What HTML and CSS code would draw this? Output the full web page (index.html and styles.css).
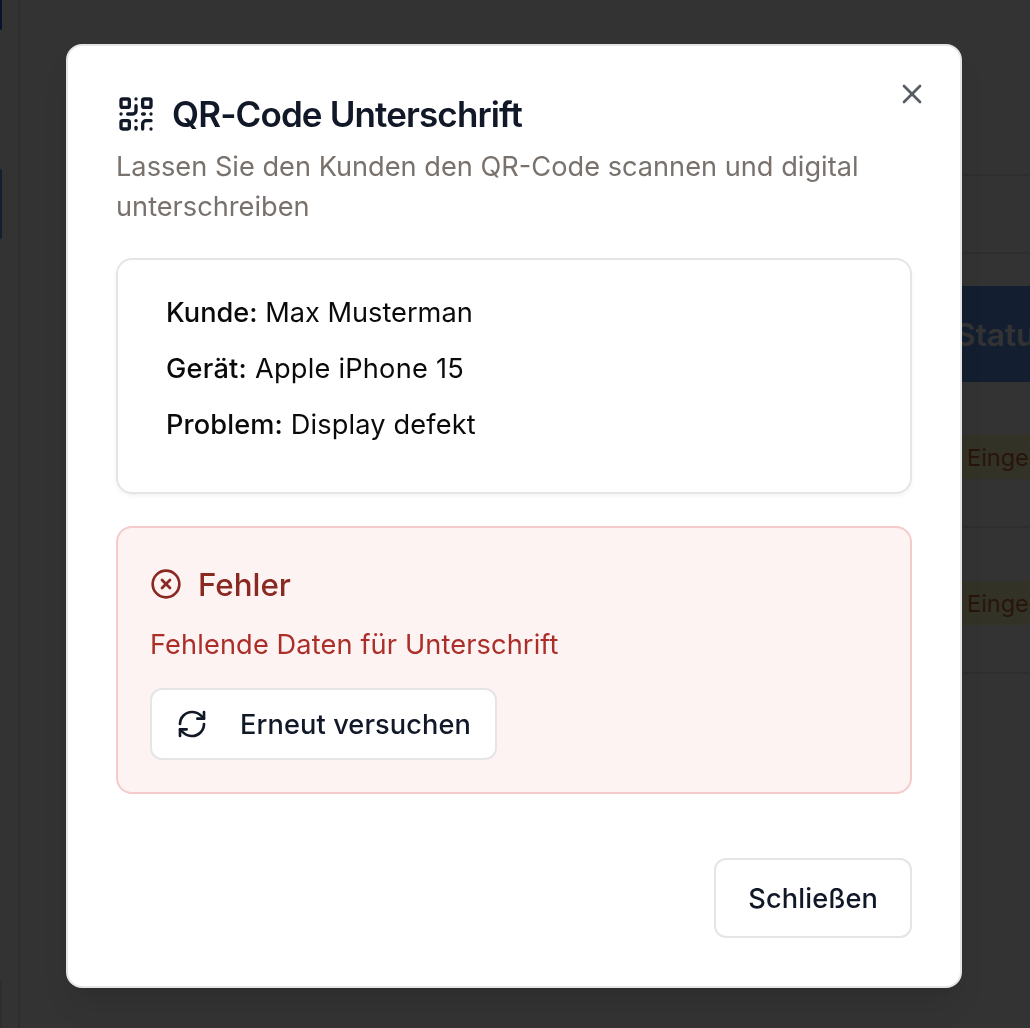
FILE: index.html
```html
<!DOCTYPE html>
<html lang="de">
<head>
<meta charset="utf-8">
<title>QR-Code Unterschrift</title>
<link rel="stylesheet" href="styles.css">
</head>
<body>
<div class="page">
  <aside class="sidebar">
    <div class="nav-item nav-item-primary"></div>
    <div class="nav-item nav-item-active"></div>
    <div class="nav-item nav-item-muted"></div>
  </aside>
  <main class="content">
    <div class="topbar"></div>
    <div class="toolbar"></div>
    <div class="table">
      <div class="table-head">Status</div>
      <div class="table-row"><span class="badge">Eingegangen</span></div>
      <div class="table-row"><span class="badge">Eingegangen</span></div>
    </div>
  </main>
</div>
<div class="overlay">
  <section class="dialog" role="dialog" aria-labelledby="dialog-title">
    <button class="close" aria-label="Schließen">
      <svg class="icon" viewBox="0 0 24 24"><path d="M18 6 6 18"/><path d="m6 6 12 12"/></svg>
    </button>
    <header class="dialog-header">
      <h2 class="title" id="dialog-title">
        <svg class="icon icon-lg" viewBox="0 0 24 24"><rect width="5" height="5" x="3" y="3" rx="1"/><rect width="5" height="5" x="16" y="3" rx="1"/><rect width="5" height="5" x="3" y="16" rx="1"/><path d="M21 16h-3a2 2 0 0 0-2 2v3"/><path d="M21 21v.01"/><path d="M12 7v3a2 2 0 0 1-2 2H7"/><path d="M3 12h.01"/><path d="M12 3h.01"/><path d="M12 16v.01"/><path d="M16 12h1"/><path d="M21 12v.01"/><path d="M12 21v-1"/></svg>
        <span>QR-Code Unterschrift</span>
      </h2>
      <p class="description">Lassen Sie den Kunden den QR-Code scannen und digital unterschreiben</p>
    </header>
    <div class="card">
      <div><strong>Kunde:</strong> Max Musterman</div>
      <div class="device"><strong>Gerät:</strong> Apple iPhone 15</div>
      <div class="problem"><strong>Problem:</strong> Display defekt</div>
    </div>
    <div class="alert">
      <div class="alert-title">
        <svg class="icon" viewBox="0 0 24 24"><circle cx="12" cy="12" r="10"/><path d="m15 9-6 6"/><path d="m9 9 6 6"/></svg>
        <span class="label">Fehler</span>
      </div>
      <p class="alert-text">Fehlende Daten für Unterschrift</p>
      <button class="button button-sm">
        <svg class="icon" viewBox="0 0 24 24"><path d="M3 12a9 9 0 0 1 9-9 9.75 9.75 0 0 1 6.74 2.74L21 8"/><path d="M21 3v5h-5"/><path d="M21 12a9 9 0 0 1-9 9 9.75 9.75 0 0 1-6.74-2.74L3 16"/><path d="M8 16H3v5"/></svg>
        <span class="label">Erneut versuchen</span>
      </button>
    </div>
    <footer class="dialog-footer">
      <button class="button"><span class="label">Schließen</span></button>
    </footer>
  </section>
</div>
</body>
</html>
```
FILE: styles.css
```css
* { box-sizing: border-box; }

body {
  margin: 0;
  background: #333;
  color: #0a0a0a;
  font: 400 27.2px/40px Inter, "Liberation Sans", sans-serif;
  overflow: hidden;
}

h2, p { margin: 0; }
strong { font-weight: 500; }

.page { display: flex; height: 1028px; overflow: hidden; }

.sidebar {
  display: flex;
  flex: none;
  flex-direction: column;
  width: 20px;
  border-right: 2px solid #2e2e2e;
}
.nav-item { width: 2px; }
.nav-item-primary { height: 30px; background: #07132f; border-bottom-right-radius: 2px; }
.nav-item-active { height: 70px; margin-top: 139px; background: #131f30; border-radius: 0 2px 2px 0; }
.nav-item-muted { height: 48px; margin-top: 741px; background: #2e2e2e; }

.content { flex: 1; min-width: 0; padding-left: 916px; white-space: nowrap; }
.topbar { height: 176px; border-bottom: 2px solid #2e2e2e; }
.toolbar { height: 78px; border-bottom: 2px solid #2e2e2e; }
.table { margin-top: 32px; }
.table-head {
  height: 96px;
  padding-left: 19px;
  background: #131f30;
  color: #333;
  font-size: 31.5px;
  font-weight: 600;
  line-height: 98px;
}
.table-row {
  display: flex;
  align-items: center;
  height: 146px;
  padding-top: 6px;
  border-bottom: 2px solid #2e2e2e;
}
.badge {
  height: 44px;
  padding: 0 31px;
  background: #323226;
  color: #28140b;
  font-size: 23.5px;
  line-height: 46px;
}

.overlay {
  position: fixed;
  inset: 0;
  display: flex;
  align-items: flex-start;
  padding: 44px 66px;
}

.dialog {
  position: relative;
  width: 896px;
  padding: 48px;
  background: #fff;
  border: 2px solid #e5e5e5;
  border-radius: 16px;
  box-shadow: 0 20px 30px -6px rgba(0, 0, 0, .1), 0 8px 12px -8px rgba(0, 0, 0, .1);
}

.icon {
  display: block;
  flex: none;
  width: 32px;
  height: 32px;
  fill: none;
  stroke: currentColor;
  stroke-width: 2;
  stroke-linecap: round;
  stroke-linejoin: round;
}
.icon-lg { width: 40px; height: 40px; }
.label { padding-top: 2px; }

.close {
  position: absolute;
  top: 32px;
  right: 32px;
  padding: 0;
  border: 0;
  background: none;
  color: #111827;
  opacity: .7;
}

.dialog-header { display: grid; gap: 13px; }
.title {
  display: flex;
  align-items: center;
  gap: 16px;
  height: 40px;
  color: #111827;
  font-size: 35px;
  font-weight: 600;
  line-height: 40px;
  letter-spacing: -.025em;
}
.description { color: #78716c; }

.card {
  display: grid;
  gap: 16px;
  margin-top: 31px;
  padding: 33px 48px 47px;
  border: 2px solid #e5e5e5;
  border-radius: 16px;
  box-shadow: 0 2px 4px rgba(0, 0, 0, .05);
}
.device { letter-spacing: .23px; }
.problem { letter-spacing: .14px; }

.alert {
  margin-top: 32px;
  padding: 32px;
  background: #fdf3f2;
  border: 2px solid #f5caca;
  border-radius: 16px;
}
.alert-title {
  display: flex;
  align-items: center;
  gap: 16px;
  height: 48px;
  color: #8a2822;
  font-size: 31.3px;
  font-weight: 500;
  line-height: 46px;
}
.alert-text { margin: 17px 0 23px; color: #ac2e28; letter-spacing: .12px; }
.alert-title .label { padding-top: 1px; }

.button {
  display: flex;
  align-items: center;
  gap: 32px;
  height: 80px;
  padding: 0 32px;
  background: #fff;
  border: 2px solid #e5e5e5;
  border-radius: 12px;
  color: #111827;
  font: inherit;
  font-weight: 500;
  letter-spacing: .1px;
}
.button-sm { height: 72px; padding: 0 24px; }

.dialog-footer { display: flex; justify-content: flex-end; margin-top: 64px; }
```
